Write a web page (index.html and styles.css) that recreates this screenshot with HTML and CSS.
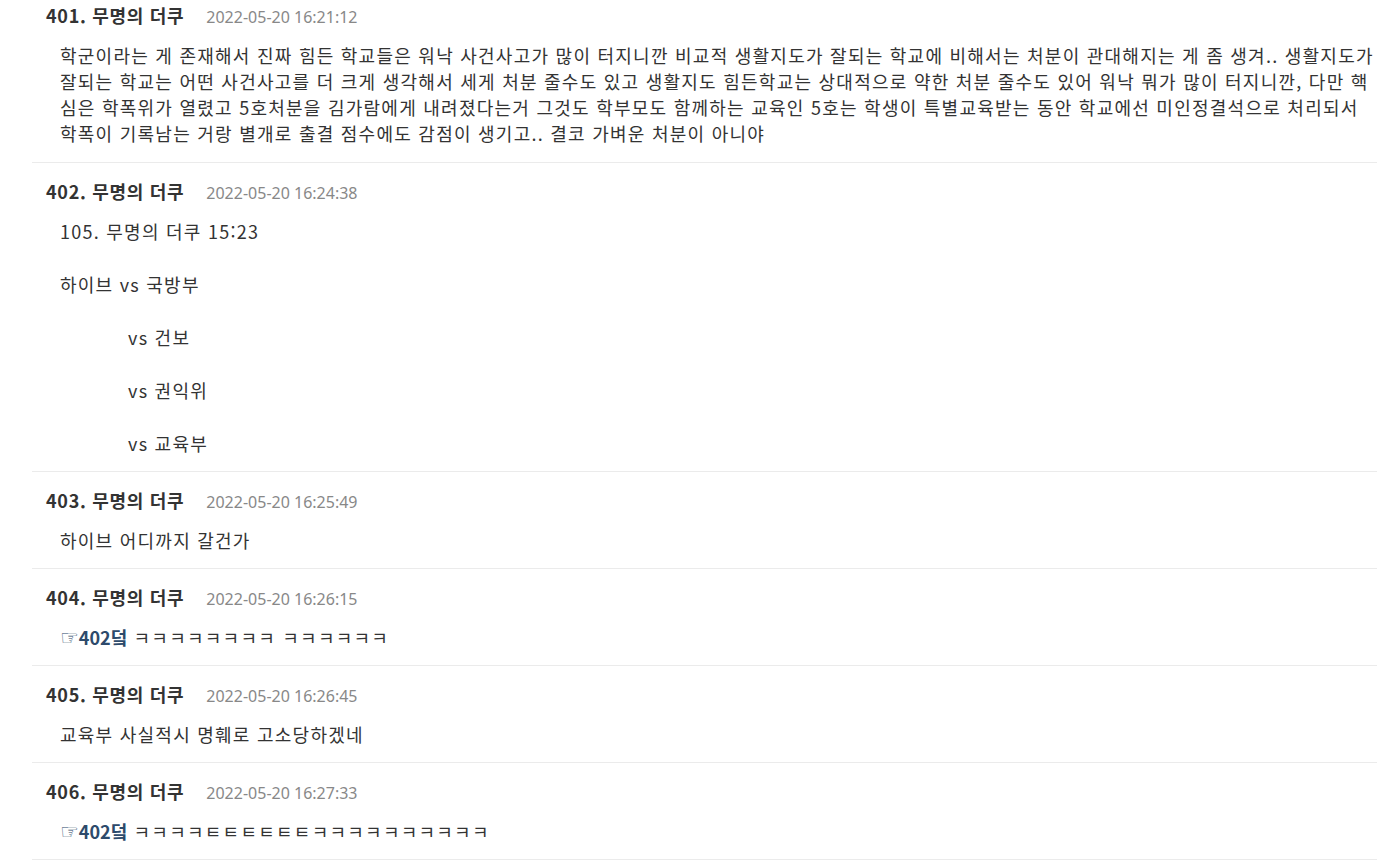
FILE: index.html
```html
<!DOCTYPE html>
<html lang="ko">
<head>
  <meta charset="UTF-8" />
  <meta name="viewport" content="width=device-width, initial-scale=1" />
  <title>무명의 더쿠</title>
  <link rel="stylesheet" href="styles.css">
</head>
<body>
  <div class="comments">
    <div class="comment">
      <div class="comment-head">
        <span class="comment-name">401. 무명의 더쿠</span>
        <span class="comment-date">2022-05-20 16:21:12</span>
      </div>
      <div class="comment-body">
        <p>학군이라는 게 존재해서 진짜 힘든 학교들은 워낙 사건사고가 많이 터지니깐 비교적 생활지도가 잘되는 학교에 비해서는 처분이 관대해지는 게 좀 생겨.. 생활지도가 잘되는 학교는 어떤 사건사고를 더 크게 생각해서 세게 처분 줄수도 있고 생활지도 힘든학교는 상대적으로 약한 처분 줄수도 있어 워낙 뭐가 많이 터지니깐, 다만 핵심은 학폭위가 열렸고 5호처분을 김가람에게 내려졌다는거 그것도 학부모도 함께하는 교육인 5호는 학생이 특별교육받는 동안 학교에선 미인정결석으로 처리되서 학폭이 기록남는 거랑 별개로 출결 점수에도 감점이 생기고.. 결코 가벼운 처분이 아니야</p>
      </div>
    </div>

    <div class="comment">
      <div class="comment-head">
        <span class="comment-name">402. 무명의 더쿠</span>
        <span class="comment-date">2022-05-20 16:24:38</span>
      </div>
      <div class="comment-body">
        <p class="gap">105. 무명의 더쿠 15:23</p>
        <p class="gap">하이브 vs 국방부</p>
        <p class="gap indent">vs 건보</p>
        <p class="gap indent">vs 권익위</p>
        <p class="indent">vs 교육부</p>
      </div>
    </div>

    <div class="comment">
      <div class="comment-head">
        <span class="comment-name">403. 무명의 더쿠</span>
        <span class="comment-date">2022-05-20 16:25:49</span>
      </div>
      <div class="comment-body">
        <p>하이브 어디까지 갈건가</p>
      </div>
    </div>

    <div class="comment">
      <div class="comment-head">
        <span class="comment-name">404. 무명의 더쿠</span>
        <span class="comment-date">2022-05-20 16:26:15</span>
      </div>
      <div class="comment-body">
        <p><a class="reply" href="#"><span class="hand">☞</span>402덬</a> ㅋㅋㅋㅋㅋㅋㅋㅋ ㅋㅋㅋㅋㅋㅋ</p>
      </div>
    </div>

    <div class="comment">
      <div class="comment-head">
        <span class="comment-name">405. 무명의 더쿠</span>
        <span class="comment-date">2022-05-20 16:26:45</span>
      </div>
      <div class="comment-body">
        <p>교육부 사실적시 명훼로 고소당하겠네</p>
      </div>
    </div>

    <div class="comment">
      <div class="comment-head">
        <span class="comment-name">406. 무명의 더쿠</span>
        <span class="comment-date">2022-05-20 16:27:33</span>
      </div>
      <div class="comment-body">
        <p><a class="reply" href="#"><span class="hand">☞</span>402덬</a> ㅋㅋㅋㅋㅌㅌㅌㅌㅌㅌㅋㅋㅋㅋㅋㅋㅋㅋㅋㅋ</p>
      </div>
    </div>
  </div>
</body>
</html>
```

FILE: styles.css
```css
body {
  margin: 0;
  background: #fff;
  color: #333;
  font-family: "Noto Sans CJK KR", "Noto Sans", sans-serif;
}

.comments {
  margin-top: -13px;
  padding-left: 32px;
}

.comment {
  border-bottom: 1px solid #ebebeb;
  padding: 16px 0 15px 14px;
}

.comment:first-child {
  padding-bottom: 16px;
}

.comment-head {
  display: flex;
  align-items: baseline;
  gap: 22px;
  height: 24px;
  line-height: 24px;
}

.comment-name {
  font-size: 18px;
  font-weight: bold;
  letter-spacing: 0.7px;
  color: #333;
}

.comment-date {
  font-family: "Noto Sans", sans-serif;
  font-size: 16px;
  color: #888;
}

.comment-body {
  margin-top: 15px;
  padding-left: 14px;
  padding-right: 1px;
  font-size: 18px;
  line-height: 26px;
  letter-spacing: 1.25px;
  word-break: break-all;
}

.comment-body p {
  margin: 0;
}

.comment-body p.gap {
  margin-bottom: 27px;
}

.comment-body p.indent {
  padding-left: 68px;
}

.reply {
  color: #2d4a6b;
  font-weight: bold;
  text-decoration: none;
  letter-spacing: 0;
}

.reply .hand {
  font-family: "DejaVu Sans", sans-serif;
  font-weight: normal;
  font-size: 21px;
  line-height: 0;
}
```
